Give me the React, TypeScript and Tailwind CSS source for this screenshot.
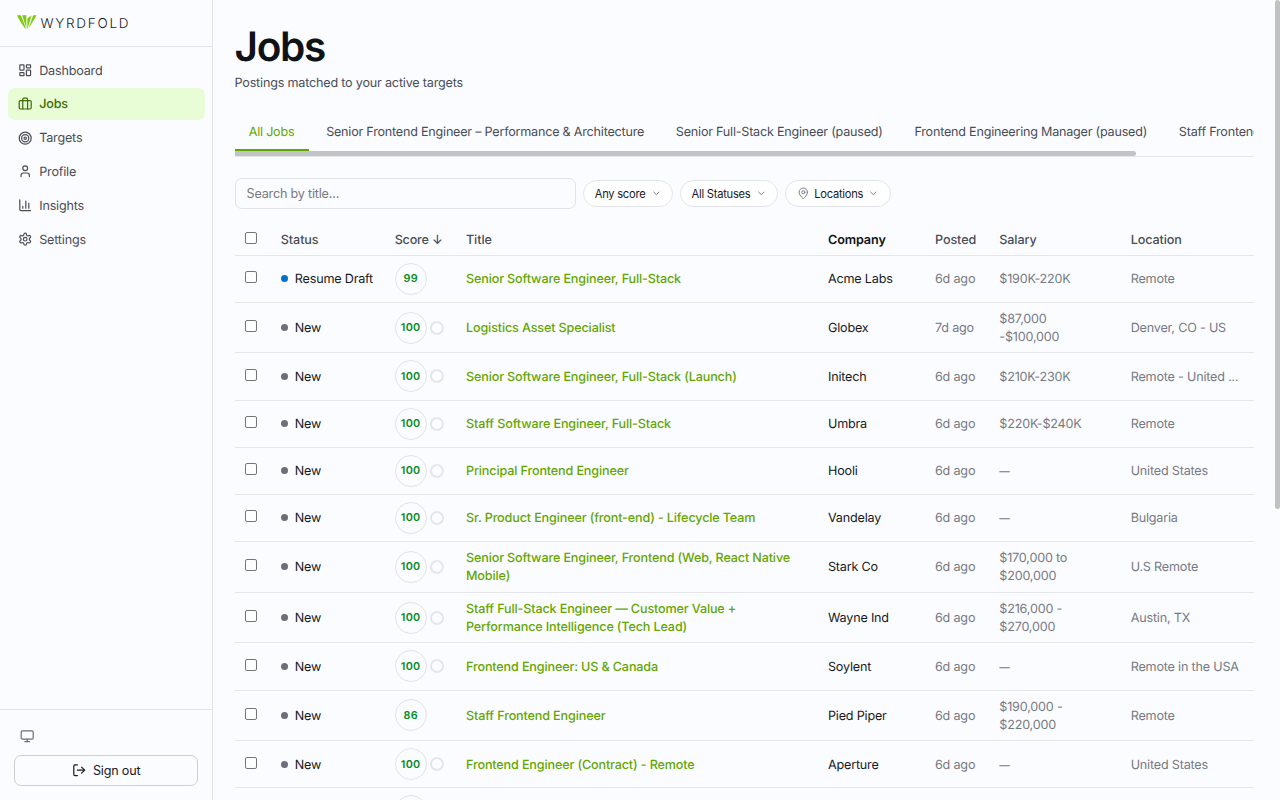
import type { ReactNode } from "react";
import { ChevronDown, LayoutDashboard, LogOut, MapPin, Monitor, Target } from "lucide-react";
import { LuBriefcase, LuUser } from "react-icons/lu";
import clsx from "clsx";

function ChartIcon() {
  return (
    <svg viewBox="0 0 24 24" fill="none" stroke="currentColor" strokeWidth="2" strokeLinecap="round" strokeLinejoin="round" className="size-full">
      <path d="M3 3v16a2 2 0 0 0 2 2h16" />
      <path d="M18 17V9" />
      <path d="M13 17V5" />
      <path d="M8 17v-3" />
    </svg>
  );
}

function GearIcon() {
  return (
    <svg viewBox="0 0 24 24" fill="none" stroke="currentColor" strokeWidth="2" strokeLinecap="round" strokeLinejoin="round" className="size-full">
      <path d="M12.22 2h-.44a2 2 0 0 0-2 2v.18a2 2 0 0 1-1 1.73l-.43.25a2 2 0 0 1-2 0l-.15-.08a2 2 0 0 0-2.73.73l-.22.38a2 2 0 0 0 .73 2.73l.15.1a2 2 0 0 1 1 1.72v.51a2 2 0 0 1-1 1.74l-.15.09a2 2 0 0 0-.73 2.73l.22.38a2 2 0 0 0 2.73.73l.15-.08a2 2 0 0 1 2 0l.43.25a2 2 0 0 1 1 1.73V20a2 2 0 0 0 2 2h.44a2 2 0 0 0 2-2v-.18a2 2 0 0 1 1-1.73l.43-.25a2 2 0 0 1 2 0l.15.08a2 2 0 0 0 2.73-.73l.22-.39a2 2 0 0 0-.73-2.73l-.15-.08a2 2 0 0 1-1-1.74v-.5a2 2 0 0 1 1-1.74l.15-.09a2 2 0 0 0 .73-2.73l-.22-.38a2 2 0 0 0-2.73-.73l-.15.08a2 2 0 0 1-2 0l-.43-.25a2 2 0 0 1-1-1.73V4a2 2 0 0 0-2-2z" />
      <circle cx="12" cy="12" r="3" />
    </svg>
  );
}

const NAV: { label: string; icon: ReactNode; active?: boolean }[] = [
  { label: "Dashboard", icon: <LayoutDashboard className="size-full" /> },
  { label: "Jobs", icon: <LuBriefcase className="size-full" />, active: true },
  { label: "Targets", icon: <Target className="size-full" /> },
  { label: "Profile", icon: <LuUser className="size-full" /> },
  { label: "Insights", icon: <ChartIcon /> },
  { label: "Settings", icon: <GearIcon /> },
];

const TABS = [
  "All Jobs",
  "Senior Frontend Engineer – Performance & Architecture",
  "Senior Full-Stack Engineer (paused)",
  "Frontend Engineering Manager (paused)",
  "Staff Frontend Engineer",
];

type Job = {
  title: string;
  company: string;
  location: string;
  salary?: string;
  score?: number;
  status?: string;
  posted?: string;
  tall?: boolean;
};

const JOBS: Job[] = [
  { title: "Senior Software Engineer, Full-Stack", company: "Acme Labs", location: "Remote", salary: "$190K-220K", score: 99, status: "Resume Draft" },
  { title: "Logistics Asset Specialist", company: "Globex", location: "Denver, CO - US", salary: "$87,000\n-$100,000", posted: "7d ago", tall: true },
  { title: "Senior Software Engineer, Full-Stack (Launch)", company: "Initech", location: "Remote - United ...", salary: "$210K-230K" },
  { title: "Staff Software Engineer, Full-Stack", company: "Umbra", location: "Remote", salary: "$220K-$240K" },
  { title: "Principal Frontend Engineer", company: "Hooli", location: "United States" },
  { title: "Sr. Product Engineer (front-end) - Lifecycle Team", company: "Vandelay", location: "Bulgaria" },
  { title: "Senior Software Engineer, Frontend (Web, React Native\nMobile)", company: "Stark Co", location: "U.S Remote", salary: "$170,000 to\n$200,000", tall: true },
  { title: "Staff Full-Stack Engineer — Customer Value +\nPerformance Intelligence (Tech Lead)", company: "Wayne Ind", location: "Austin, TX", salary: "$216,000 -\n$270,000", tall: true },
  { title: "Frontend Engineer: US & Canada", company: "Soylent", location: "Remote in the USA" },
  { title: "Staff Frontend Engineer", company: "Pied Piper", location: "Remote", salary: "$190,000 -\n$220,000", score: 86, tall: true },
  { title: "Frontend Engineer (Contract) - Remote", company: "Aperture", location: "United States" },
  { title: "Senior Frontend Engineer", company: "Cyberdyne", location: "Remote" },
];

const COLS = "grid grid-cols-[46.3px_113.9px_71.3px_362px_107px_64.3px_131.4px_1fr] items-center";

function Checkbox() {
  return <span className="block size-3 ml-[10.5px] mb-[3px] rounded-[2px] border border-[#767676] bg-white" />;
}

function Logo() {
  return (
    <svg viewBox="0 0 20 15" className="w-5 h-[15px]">
      <path d="M0 0.2H3.9L9.3 14.6Q4.5 9.5 0 0.2Z" fill="#7cc80a" />
      <path d="M5.2 0.2H9.3V13.2Z" fill="#7cc80a" />
      <path d="M10.4 3.4L14.4 0.6L10.4 14.4Z" fill="#7cc80a" />
      <path d="M16.2 0.2H19.6L11.4 13.8Z" fill="#7cc80a" />
    </svg>
  );
}

function Sidebar() {
  return (
    <aside className="w-[213px] h-full shrink-0 flex flex-col border-r border-[#e2e4e9]">
      <div className="h-[46.5px] shrink-0 flex items-center pl-[17px] border-b border-[#e2e4e9]">
        <Logo />
        <span className="ml-[3.5px] pt-[2.5px] text-[13.5px] font-light tracking-[1.75px] text-[#17191d]">WYRDFOLD</span>
      </div>
      <nav className="flex-1 flex flex-col gap-[1.8px] px-[7.5px] pt-[7.7px]">
        {NAV.map((item) => (
          <a
            key={item.label}
            className={clsx(
              "h-8 flex items-center rounded-[7px] pl-[10.3px] gap-[7px]",
              item.active ? "bg-[#e8fcd5] text-[#3d6b00] font-medium" : "text-[#494d55]"
            )}
          >
            <span className="size-[14.4px]">{item.icon}</span>
            <span className="pt-[2.8px]">{item.label}</span>
          </a>
        ))}
      </nav>
      <div className="h-[91px] shrink-0 border-t border-[#e2e4e9] px-[14px] pt-[19px]">
        <Monitor className="size-[14.4px] ml-[5.5px] text-[#6b7078]" />
        <button className="mt-[12px] h-[30.5px] w-[184px] flex items-center justify-center gap-[7px] rounded-[7px] border border-[#cbced3] text-[#17191d]">
          <LogOut className="size-[14.4px]" />
          Sign out
        </button>
      </div>
    </aside>
  );
}

function FilterPill({ label, pin }: { label: string; pin?: boolean }) {
  return (
    <button className="h-[27px] flex items-center rounded-full border border-[#e2e4e9] bg-white px-[10.5px] text-[11.2px] tracking-[-0.27px] text-[#17191d]">
      {pin && <MapPin className="size-[12.6px] mr-[5px] text-[#6b7078]" strokeWidth={1.75} />}
      <span className="pt-px">{label}</span>
      <ChevronDown className="size-[10.8px] ml-[5.2px] text-[#6b7078]" />
    </button>
  );
}

function JobRow({ job }: { job: Job }) {
  const score = job.score ?? 100;
  return (
    <div className={clsx(COLS, "border-b border-[#e4e6eb] text-[#767a82] leading-[18px]", job.tall ? "h-[50.7px]" : "h-[47.15px]")}>
      <Checkbox />
      <div className="flex items-center gap-[7px] text-[#17191d]">
        <span className={clsx("size-[7px] rounded-full", job.status ? "bg-[#0072c6]" : "bg-[#6b7078]")} />
        <span className="pt-[3px]">{job.status ?? "New"}</span>
      </div>
      <div className="flex items-center gap-[3.5px]">
        <span className="size-8 flex items-center justify-center rounded-full border border-[#e0e3e8] pt-px text-[10.8px] font-semibold tracking-[0.3px] text-[#078a1e]">
          {score}
        </span>
        {score === 100 && <span className="size-[14px] rounded-full border-2 border-[#e4e6eb]" />}
      </div>
      <div className="pt-[3px] whitespace-pre font-medium tracking-[-0.14px] text-[#64a600]">{job.title}</div>
      <div className="pt-[3px] text-[#17191d]">{job.company}</div>
      <div className="pt-[3px]">{job.posted ?? "6d ago"}</div>
      <div className="pt-[3px] whitespace-pre">{job.salary ?? <span className="text-[10.5px]">—</span>}</div>
      <div className="pt-[3px] whitespace-nowrap">{job.location}</div>
    </div>
  );
}

export default function App() {
  return (
    <div className="relative flex w-[1280px] h-[800px] overflow-hidden bg-[#fbfcff] font-['Inter',sans-serif] text-[12.6px] leading-[18px] tracking-[-0.19px] text-[#17191d] [text-rendering:geometricPrecision]">
      <Sidebar />
      <main className="w-[1041px] pl-[21.5px] pt-[25px] h-full overflow-hidden">
        <h1 className="text-[40.5px] leading-[44px] font-semibold tracking-[-1.3px] text-[#101216]">Jobs</h1>
        <p className="mt-[5.5px] text-[#494d55]">Postings matched to your active targets</p>

        {/* Tabs with horizontal scrollbar */}
        <div className="mt-[19.5px] h-[44.5px] overflow-hidden border-b border-[#e4e6eb]">
          <div className="flex h-[39px] gap-[3.4px] tracking-[-0.22px]">
            {TABS.map((tab, i) => (
              <div
                key={tab}
                className={clsx(
                  "shrink-0 px-[14.2px] pt-3 whitespace-nowrap",
                  i === 0 ? "border-b-2 border-[#64a600] text-[#64a600]" : "text-[#494d55]"
                )}
              >
                {tab}
              </div>
            ))}
          </div>
          <div className="h-[5px] w-[901.5px] rounded-r-full bg-[#c1c3c4]" />
        </div>

        <div className="mt-[21.5px] flex items-center gap-[7.2px]">
          <input
            placeholder="Search by title..."
            className="h-[30.5px] w-[341.5px] rounded-[7px] border border-[#e0e3e8] bg-[#fbfcff] px-[11px] placeholder:text-[#767a82]"
          />
          <FilterPill label="Any score" />
          <FilterPill label="All Statuses" />
          <FilterPill label="Locations" pin />
        </div>

        {/* Jobs table */}
        <div className="mt-[15.6px]">
          <div className={clsx(COLS, "h-[31.5px] border-b-[1.5px] border-[#e4e6eb] font-medium tracking-[-0.1px] text-[#494d55]")}>
            <Checkbox />
            <div className="pt-[3px]">Status</div>
            <div className="pt-[3px] tracking-[-0.2px]">Score ↓</div>
            <div className="pt-[3px]">Title</div>
            <div className="pt-[3px] font-semibold text-[#101216]">Company</div>
            <div className="pt-[3px]">Posted</div>
            <div className="pt-[3px]">Salary</div>
            <div className="pt-[3px]">Location</div>
          </div>
          {JOBS.map((job) => (
            <JobRow key={job.title} job={job} />
          ))}
        </div>
      </main>
      <div className="absolute right-0 top-0 h-[509px] w-[5px] rounded-full bg-[#c1c1c1]" />
    </div>
  );
}
